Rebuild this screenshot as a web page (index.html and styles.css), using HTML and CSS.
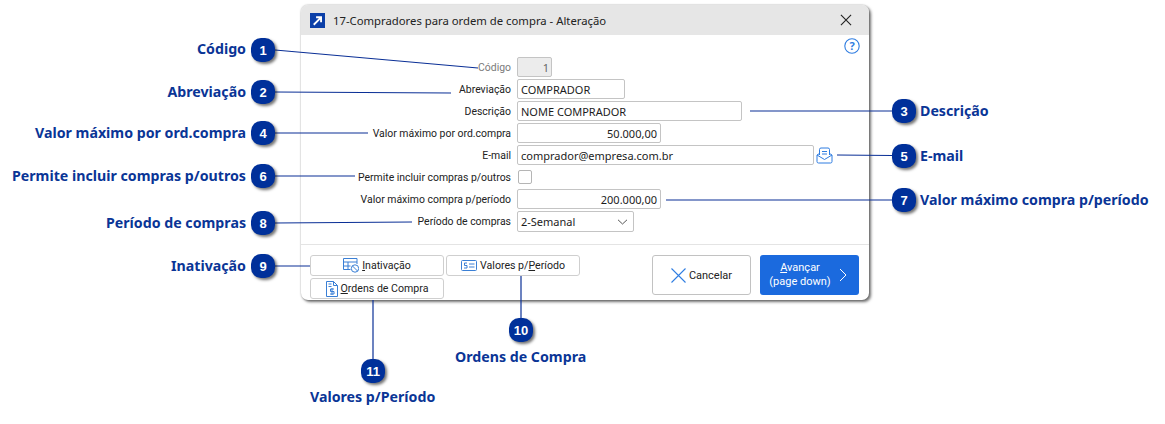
FILE: index.html
```html
<!DOCTYPE html>
<html lang="pt">
<head>
<meta charset="utf-8">
<title>17-Compradores para ordem de compra - Alteração</title>
<link rel="stylesheet" href="styles.css">
</head>
<body>
<div class="canvas">
  <section class="window">
    <header class="titlebar">
      <svg class="app-icon" width="15" height="15" viewBox="0 0 16 16"><rect width="16" height="16" fill="#0b3fa8"/><path d="M4 12.500 L11 5.500 M6.500 4.500 H11.800 V9.800" fill="none" stroke="#fff" stroke-width="2"/></svg>
      <span class="title">17-Compradores para ordem de compra - Alteração</span>
      <svg class="close" width="12" height="12" viewBox="0 0 13 13"><path d="M1 1 L12 12 M12 1 L1 12" stroke="#222" stroke-width="1.200" fill="none"/></svg>
    </header>
    <div class="body">
      <div class="help-row">
        <svg width="16" height="16" viewBox="0 0 16 16"><circle cx="8" cy="8" r="7.200" fill="none" stroke="#2f7de1" stroke-width="1.100"/><text x="8" y="12" text-anchor="middle" class="help-q">?</text></svg>
      </div>
      <div class="form">
        <div class="row"><span class="label muted">Código</span><div class="field disabled w-code num">1</div></div>
        <div class="row"><span class="label">Abreviação</span><div class="field w-abbr">COMPRADOR</div></div>
        <div class="row"><span class="label">Descrição</span><div class="field w-desc">NOME COMPRADOR</div></div>
        <div class="row"><span class="label">Valor máximo por ord.compra</span><div class="field w-val num">50.000,00</div></div>
        <div class="row"><span class="label">E-mail</span><div class="field w-mail">comprador@empresa.com.br</div>
          <svg class="mail-icon" width="17" height="17" viewBox="0 0 17 17" fill="none" stroke="#2f7de1" stroke-width="1"><path d="M3.500 8 V2.500 Q3.500 1 5 1 H12 Q13.500 1 13.500 2.500 V8"/><path d="M6 4.500 H11 M6 7 H11"/><path d="M1 8 L3.500 6.500 M16 8 L13.500 6.500"/><path d="M1 8 V14.500 Q1 16 2.500 16 H14.500 Q16 16 16 14.500 V8 L8.500 12.500 Z"/></svg>
        </div>
        <div class="row"><span class="label">Permite incluir compras p/outros</span><div class="checkbox"></div></div>
        <div class="row"><span class="label">Valor máximo compra p/período</span><div class="field w-val num">200.000,00</div></div>
        <div class="row"><span class="label">Período de compras</span><div class="field select w-sel"><span>2-Semanal</span>
          <svg width="11" height="6" viewBox="0 0 11 6"><path d="M1 .8 L5.500 5 L10 .8" fill="none" stroke="#555" stroke-width="1"/></svg></div></div>
      </div>
    </div>
    <footer class="footer">
      <div class="tabs">
        <div class="tab">
          <svg width="16" height="15" viewBox="0 0 16 15" fill="none" stroke="#3a7fd5" stroke-width="1"><path d="M7.500 11.500 H.5 V.5 H14 V6"/><path d="M.5 4 H14 M.5 8 H7.500 M5 4 V11.500"/><circle cx="12" cy="10.500" r="3.700"/><path d="M9.500 8 L14.500 13"/></svg>
          <span><u>I</u>nativação</span></div>
        <div class="tab">
          <svg width="16" height="11" viewBox="0 0 16 11" fill="none" stroke="#3a7fd5" stroke-width="1"><rect x=".5" y=".5" width="15" height="10" rx="1"/><path d="M6 3 H3.500 V5.500 H6 V8 H3 M8 4 H13.500 M8 7 H13.500"/></svg>
          <span>Valores p/<u>P</u>eríodo</span></div>
        <div class="tab">
          <svg width="12" height="16" viewBox="0 0 12 16" fill="none" stroke="#3a7fd5" stroke-width="1"><path d="M.5 .5 H7.500 L11.500 4.500 V15.500 H.5 Z M7.500 .5 V4.500 H11.500"/><path d="M2.500 3 H5.500 M2.500 5.500 H5.500"/><path d="M8 8 H4.500 V10.500 H8 V13 H4 M6 7 V14"/></svg>
          <span><u>O</u>rdens de Compra</span></div>
      </div>
      <div class="actions">
        <div class="btn cancel">
          <svg width="15" height="15" viewBox="0 0 15 15"><path d="M.5 .5 L14.500 14.500 M14.500 .5 L.5 14.500" stroke="#2f7de1" stroke-width="1.100" fill="none"/></svg>
          <span>Cancelar</span></div>
        <div class="btn next">
          <span class="next-text"><u>A</u>vançar<br>(page down)</span>
          <svg width="8" height="14" viewBox="0 0 8 14"><path d="M1 1 L7 7 L1 13" fill="none" stroke="#fff" stroke-width="1"/></svg></div>
      </div>
    </footer>
  </section>

  <svg class="leaders" width="1165" height="424" viewBox="0 0 1165 424" fill="none" stroke="#0a2f96" stroke-width="1.200">
    <path d="M275 50 L478 68"/><path d="M275 92 L451 93"/><path d="M750 111 L892 111"/><path d="M275 133 L368 133"/>
    <path d="M837 155 L892 155.500"/><path d="M275 176 L355 176"/><path d="M666 200 L892 200"/><path d="M275 223 L412 222"/>
    <path d="M275 266 L310 266"/><path d="M521 276 L521 318"/><path d="M373 300 L373 359"/>
  </svg>

  <span class="callout-label end lb-1">Código</span><span class="badge bd-1">1</span>
  <span class="callout-label end lb-2">Abreviação</span><span class="badge bd-2">2</span>
  <span class="callout-label lb-3">Descrição</span><span class="badge bd-3">3</span>
  <span class="callout-label end lb-4">Valor máximo por ord.compra</span><span class="badge bd-4">4</span>
  <span class="callout-label lb-5">E-mail</span><span class="badge bd-5">5</span>
  <span class="callout-label end lb-6">Permite incluir compras p/outros</span><span class="badge bd-6">6</span>
  <span class="callout-label lb-7">Valor máximo compra p/período</span><span class="badge bd-7">7</span>
  <span class="callout-label end lb-8">Período de compras</span><span class="badge bd-8">8</span>
  <span class="callout-label end lb-9">Inativação</span><span class="badge bd-9">9</span>
  <span class="callout-label lb-10">Ordens de Compra</span><span class="badge bd-10">10</span>
  <span class="callout-label lb-11">Valores p/Período</span><span class="badge bd-11">11</span>
</div>
</body>
</html>
```
FILE: styles.css
```css
* { box-sizing: border-box; }
html, body { margin: 0; padding: 0; background: #fff; }
body { font-family: "Noto Sans", "Open Sans", sans-serif; font-size: 11px; color: #222; }
.canvas { position: relative; width: 1165px; height: 424px; overflow: hidden; }

.window {
  position: absolute; left: 301px; top: 5px; width: 568px; height: 295px;
  display: flex; flex-direction: column;
  background: #fff; border-radius: 7px;
  box-shadow: 0 0 2px rgba(0,0,0,.35), 2px 2px 3px rgba(0,0,0,.55);
}
.titlebar {
  height: 30px; flex: none; display: flex; align-items: center;
  padding: 0 17px 0 9px; background: #e6e6e6; border-radius: 7px 7px 0 0;
}
.app-icon { flex: none; margin-top: 1px; }
.title { margin-left: 8px; flex: 1; font-size: 11.300px; color: #222; }
.close { flex: none; }

.body { flex: 1; padding-top: 3px; }
.help-row { height: 16px; display: flex; justify-content: flex-end; padding-right: 9px; margin-bottom: 3px; }
.help-q { font: 700 11px "Noto Sans", sans-serif; fill: #2f7de1; }

.form { display: flex; flex-direction: column; gap: 2px; }
.row { display: flex; align-items: center; height: 20px; }
.label { width: 210px; flex: none; text-align: right; font: 10.450px Roboto, "Noto Sans", sans-serif; white-space: nowrap; color: #222; padding-top: 1px; }
.label.muted { color: #7a7a7a; }
.field {
  margin-left: 6px; height: 20px; padding: 0 3px; display: flex; align-items: center;
  border: 1px solid #c4c4c4; border-radius: 2px; background: #fff;
  font-size: 11px; color: #1c1c1c; white-space: nowrap;
}
.field.num { justify-content: flex-end; }
.field.disabled { background: #ececec; color: #666; }
.w-code { width: 35px; padding-right: 2px; }
.w-abbr { width: 108px; }
.w-desc { width: 225px; }
.w-val { width: 144px; }
.w-mail { width: 297px; }
.w-sel { width: 117px; height: 21px; margin-top: 1px; }
.select { justify-content: space-between; padding-right: 5px; }
.mail-icon { margin-left: 2px; flex: none; }
.checkbox { margin-left: 7px; width: 14px; height: 14px; border: 1px solid #b5b5b5; border-radius: 2px; background: #fff; }

.footer {
  flex: none; height: 56px; border-top: 1px solid #e4e4e4;
  display: flex; justify-content: space-between; align-items: flex-start;
  padding: 10px 10px 0 9px;
}
.tabs { display: grid; grid-template-columns: 134px 134px; grid-auto-rows: 21px; gap: 2px; }
.tab {
  display: flex; align-items: center; justify-content: center; gap: 3px;
  border: 1px solid #cfcfcf; border-radius: 3px; background: #fff; font: 10.600px Roboto, "Noto Sans", sans-serif; color: #222;
  white-space: nowrap;
}
.tab svg { flex: none; }
.actions { display: flex; gap: 9px; }
.btn { width: 99px; height: 40px; border-radius: 3px; display: flex; align-items: center; justify-content: center; white-space: nowrap; font: 11px Roboto, "Noto Sans", sans-serif; }
.cancel { border: 1px solid #c2c2c2; gap: 3px; color: #222; }
.next { background: #1b6ade; color: #fff; gap: 8px; padding-right: 3px; }
.next-text { text-align: center; line-height: 14px; }

.leaders { position: absolute; left: 0; top: 0; pointer-events: none; }

.badge {
  position: absolute; width: 24px; height: 24px; margin: -12px 0 0 -12px;
  display: flex; align-items: center; justify-content: center;
  background: #00309a; color: #fff; border-radius: 10px;
  font: 700 13px "Liberation Sans", Arial, sans-serif;
  box-shadow: 2px 2px 3px rgba(0,0,0,.55);
}
.callout-label {
  position: absolute; transform: translateY(-50%);
  font: 700 14.200px "Noto Sans", "Open Sans", sans-serif; color: #0a3596; white-space: nowrap; line-height: 20px;
}
.callout-label.end { transform: translate(-100%, -50%); }

.bd-1 { left: 263px; top: 50px; } .bd-2 { left: 263px; top: 92px; }
.bd-3 { left: 904px; top: 111px; } .bd-4 { left: 263px; top: 133px; }
.bd-5 { left: 904px; top: 156px; } .bd-6 { left: 263px; top: 176px; }
.bd-7 { left: 904px; top: 200px; } .bd-8 { left: 263px; top: 223px; }
.bd-9 { left: 263px; top: 266px; } .bd-10 { left: 521px; top: 330px; }
.bd-11 { left: 373px; top: 371px; }
.lb-1 { left: 246px; top: 49px; } .lb-2 { left: 246px; top: 92px; }
.lb-3 { left: 920px; top: 111px; } .lb-4 { left: 246px; top: 133px; }
.lb-5 { left: 920px; top: 156px; } .lb-6 { left: 246px; top: 176px; }
.lb-7 { left: 920px; top: 200px; } .lb-8 { left: 246px; top: 223px; }
.lb-9 { left: 246px; top: 266px; } .lb-10 { left: 455px; top: 357px; }
.lb-11 { left: 310px; top: 397px; }
```
